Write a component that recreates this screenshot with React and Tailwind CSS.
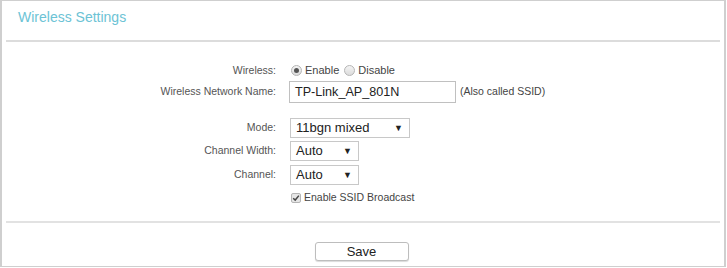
import React from 'react'

function Label({ children }) {
  return <div className="w-[270px] shrink-0 text-right text-[10.5px] text-[#555]">{children}</div>
}

function Select({ value, width }) {
  return (
    <div
      className={`flex h-[20px] items-center justify-between border border-[#c8c8c8] bg-white pl-[5px] pr-[6px] text-[13px] leading-[16px] text-[#222] ${width}`}
    >
      <span>{value}</span>
      <span className="text-[9px] text-[#222]">▼</span>
    </div>
  )
}

function Radio({ checked }) {
  return (
    <span className="flex h-[11px] w-[11px] items-center justify-center rounded-full border border-[#b5b5b5] bg-gradient-to-b from-[#f4f4f4] to-[#dcdcdc]">
      {checked && <span className="h-[5px] w-[5px] rounded-full bg-[#555]" />}
    </span>
  )
}

export default function App() {
  return (
    <div className="h-[268px] w-[727px] bg-white font-['Liberation_Sans',Arial,sans-serif]">
      <div className="h-[267px] w-[726px] border-l-2 border-r-2 border-t border-b border-[#cfcfcf] px-[4px]">
        <div className="h-[41px] border-b-2 border-[#dcdcdc] pl-[12px] pt-[8px] text-[14px] leading-[16px] text-[#6cc3d5]">
          Wireless Settings
        </div>

        <div className="flex flex-col pt-[20px]">
          <div className="flex h-[17px] items-center gap-[15px]">
            <Label>Wireless:</Label>
            <div className="flex items-center text-[11px] text-[#444]">
              <Radio checked />
              <span className="ml-[3px]">Enable</span>
              <span className="ml-[5px]"><Radio /></span>
              <span className="ml-[3px]">Disable</span>
            </div>
          </div>

          <div className="mt-[2px] flex h-[22px] items-center gap-[13px]">
            <Label>Wireless Network Name:</Label>
            <div className="flex h-[22px] w-[167px] items-center border border-[#c0c0c0] pl-[5px] text-[12.6px] text-[#222]">
              TP-Link_AP_801N
            </div>
            <span className="ml-[-9px] text-[10.5px] text-[#444]">(Also called SSID)</span>
          </div>

          <div className="mt-[15px] flex h-[20px] items-center gap-[14px]">
            <Label>Mode:</Label>
            <Select value="11bgn mixed" width="w-[120px]" />
          </div>

          <div className="mt-[3px] flex h-[20px] items-center gap-[14px]">
            <Label>Channel Width:</Label>
            <Select value="Auto" width="w-[69px]" />
          </div>

          <div className="mt-[4px] flex h-[20px] items-center gap-[14px]">
            <Label>Channel:</Label>
            <Select value="Auto" width="w-[69px]" />
          </div>

          <div className="mt-[7px] flex h-[11px] items-center gap-[15px]">
            <div className="w-[270px] shrink-0" />
            <div className="flex items-center text-[10.5px] text-[#444]">
              <span className="flex h-[10px] w-[10px] items-center justify-center rounded-[2px] border border-[#b5b5b5] bg-[#e6e6e6]">
                <svg viewBox="0 0 10 10" className="h-[8px] w-[8px]">
                  <path d="M1.5 5.2 L4 7.6 L8.6 2" fill="none" stroke="#444" strokeWidth="1.8" />
                </svg>
              </span>
              <span className="ml-[3px]">Enable SSID Broadcast</span>
            </div>
          </div>
        </div>

        <div className="mt-[18px] border-b-2 border-[#e2e2e2]" />

        <div className="flex justify-center pt-[19px]">
          <button className="ml-[-3px] h-[19px] w-[94px] rounded-[3px] border border-[#bdbdbd] bg-white text-[13px] leading-[16px] text-[#222] shadow-[0_1px_1px_rgba(0,0,0,0.15)]">
            Save
          </button>
        </div>
      </div>
    </div>
  )
}
